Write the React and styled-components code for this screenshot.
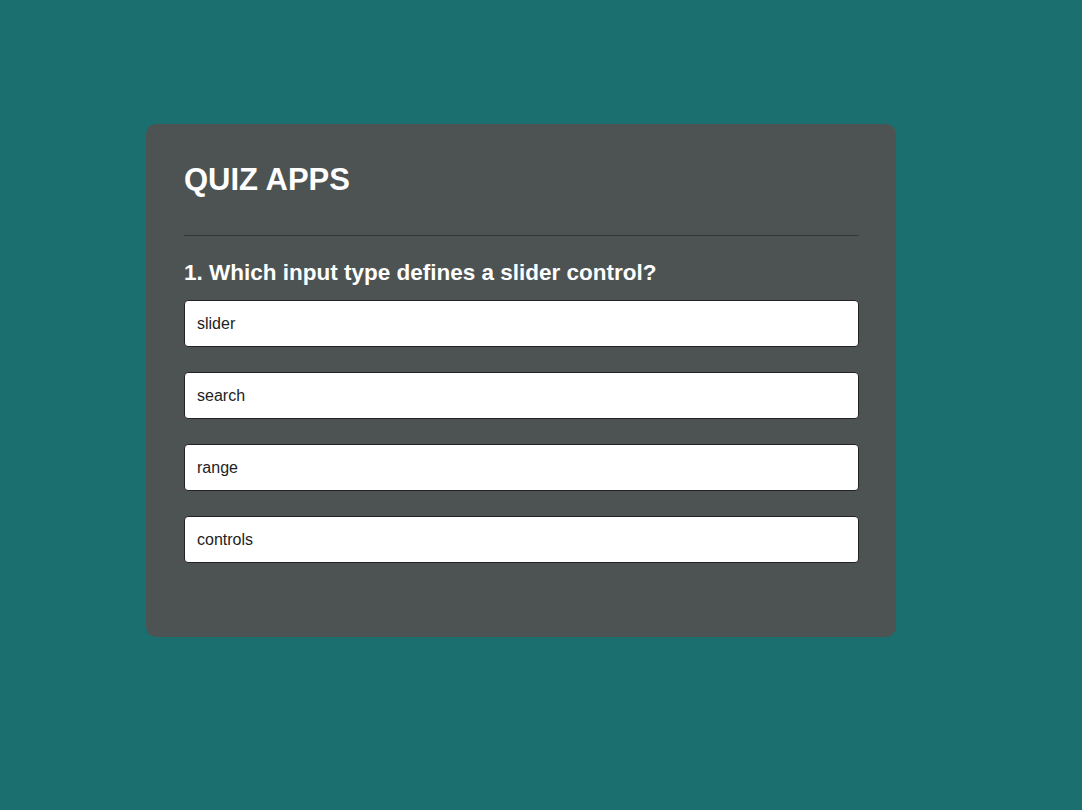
import React from 'react';
import styled, { createGlobalStyle } from 'styled-components';

const Global = createGlobalStyle`
  html, body {
    margin: 0;
    padding: 0;
    background-color: #1b6f6e;
    font-family: "Liberation Sans", Arial, sans-serif;
  }
`;

const Page = styled.main`
  min-height: 810px;
  box-sizing: border-box;
  padding: 124px 0 0 146px;
`;

const Card = styled.section`
  width: 750px;
  box-sizing: border-box;
  background-color: #4d5353;
  border-radius: 10px;
  padding: 38px 37px 74px 38px;
`;

const Title = styled.h1`
  margin: 0;
  padding-bottom: 37px;
  border-bottom: 1px solid #333636;
  color: #ffffff;
  font-size: 31px;
  font-weight: 700;
`;

const Question = styled.h2`
  margin: 24px 0 14px;
  color: #ffffff;
  font-size: 22.5px;
  font-weight: 700;
`;

const Options = styled.div`
  display: flex;
  flex-direction: column;
  gap: 25px;
`;

const Option = styled.button`
  display: block;
  width: 100%;
  height: 47px;
  box-sizing: border-box;
  padding: 0 12px;
  text-align: left;
  background-color: #ffffff;
  border: 1px solid #222222;
  border-radius: 4px;
  color: #222222;
  font-family: "Liberation Sans", Arial, sans-serif;
  font-size: 16px;
  cursor: pointer;
`;

const answers = ['slider', 'search', 'range', 'controls'];

const App = () => {
  return (
    <Page>
      <Global />
      <Card>
        <Title>QUIZ APPS</Title>
        <Question>1. Which input type defines a slider control?</Question>
        <Options>
          {answers.map((a) => (
            <Option key={a} type="button">{a}</Option>
          ))}
        </Options>
      </Card>
    </Page>
  );
};

export default App;
